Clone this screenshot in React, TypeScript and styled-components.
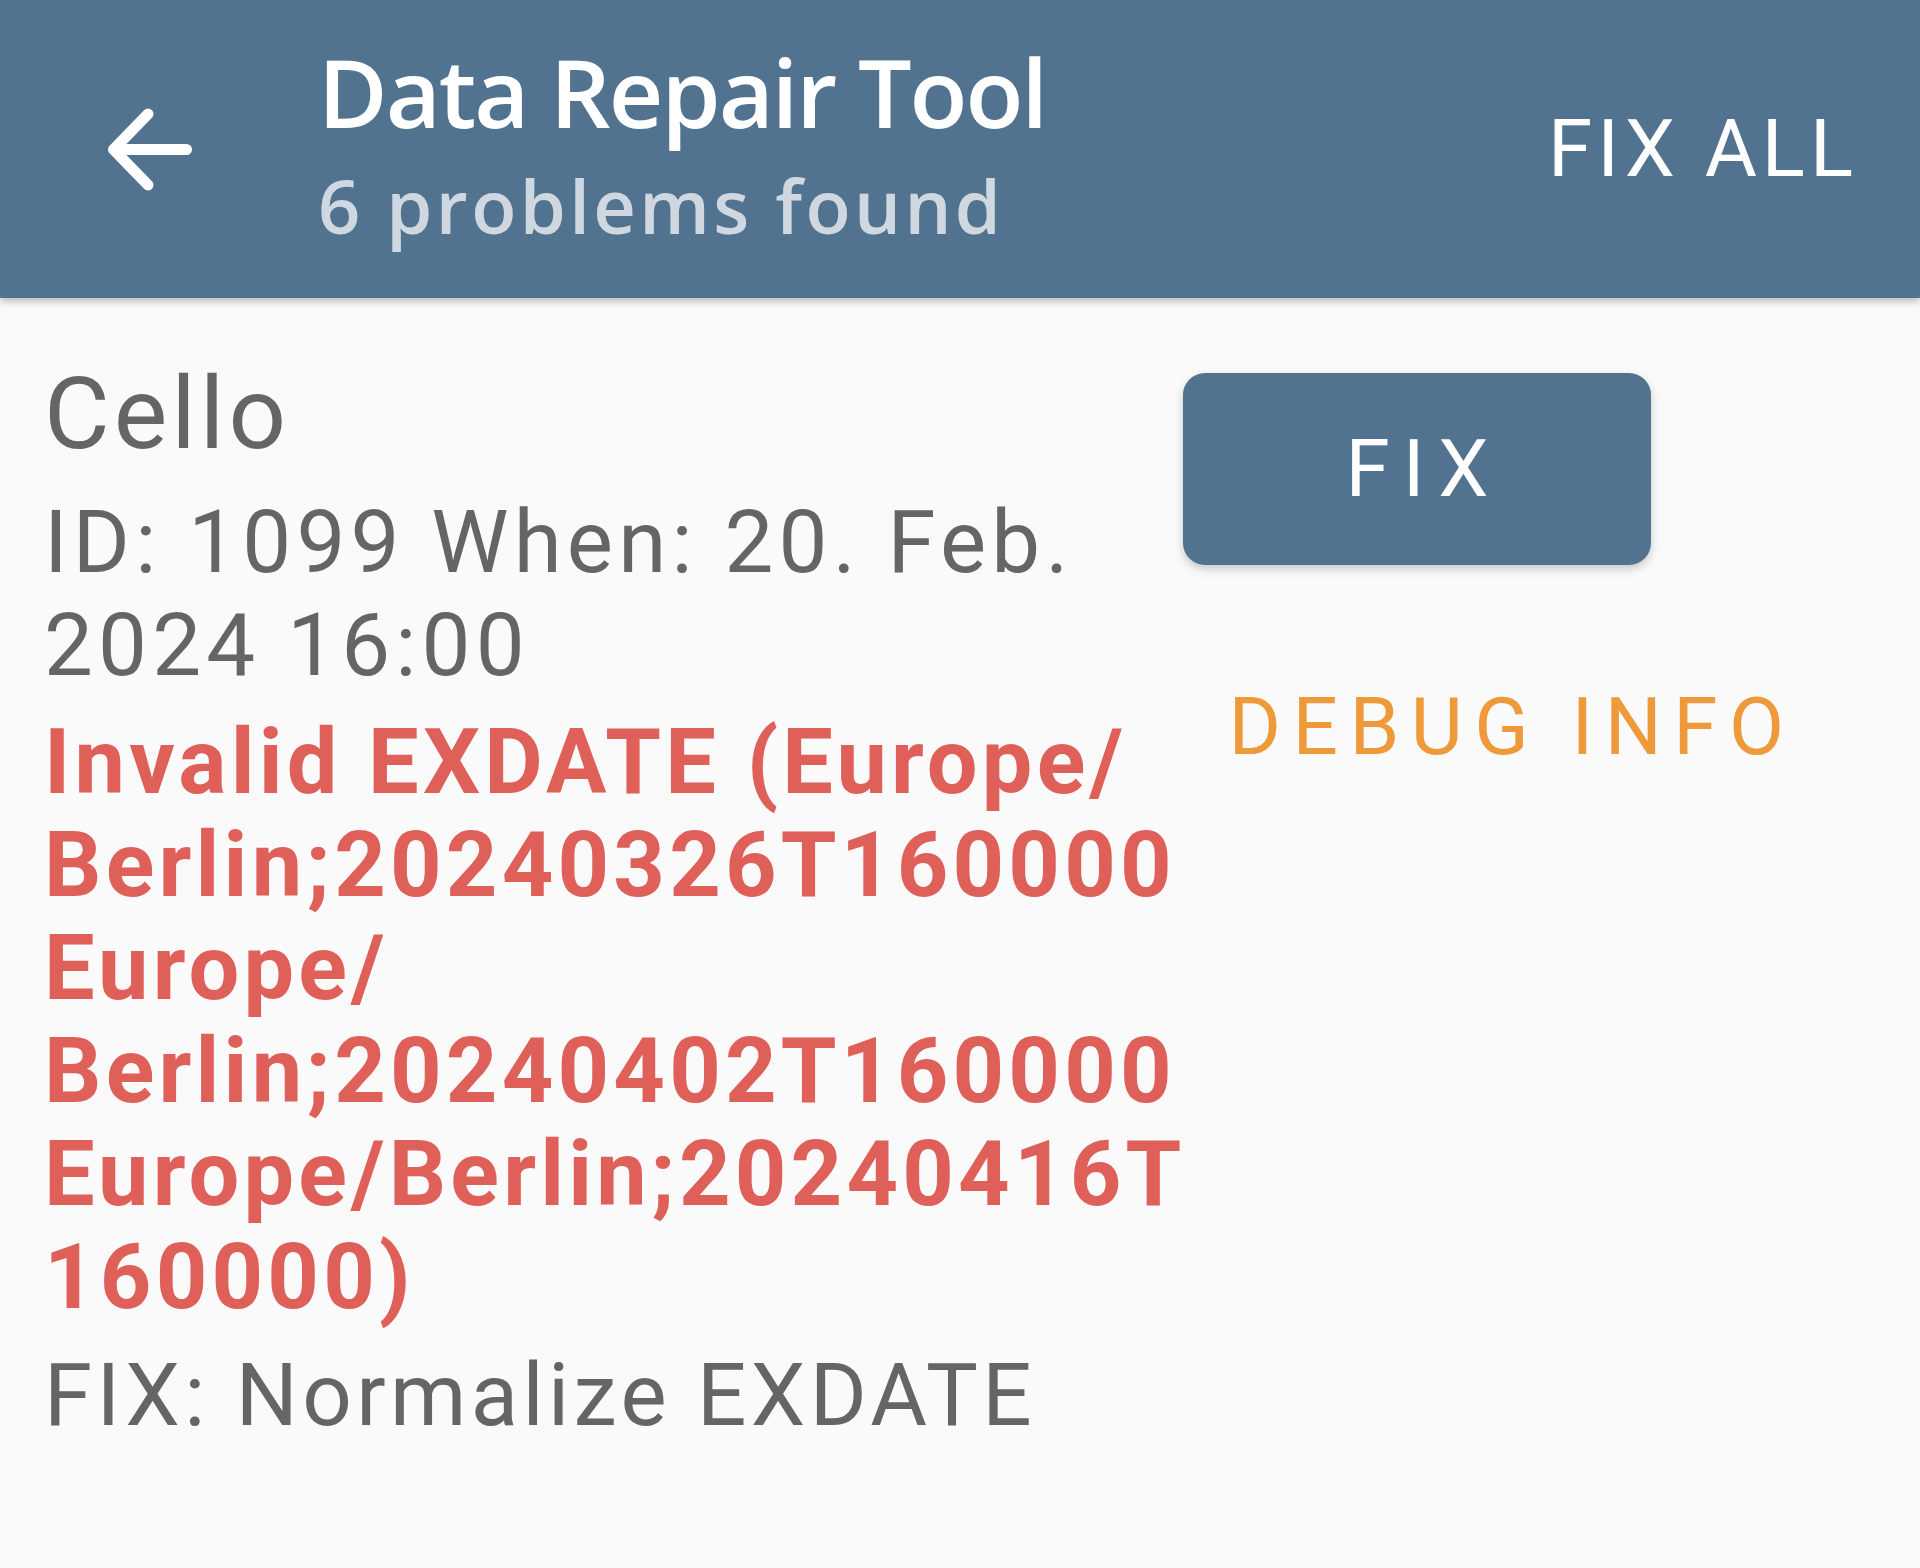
import React from "react";
import styled, { createGlobalStyle } from "styled-components";

const GlobalStyle = createGlobalStyle`
  html, body { margin: 0; padding: 0; background: #fafafa; }
  body { font-family: Roboto, "Noto Sans", sans-serif; }
`;

const Page = styled.div`
  width: 1920px;
  min-height: 1568px;
  background: #fafafa;
  display: flex;
  flex-direction: column;
`;

const Header = styled.header`
  height: 298px;
  box-sizing: border-box;
  background: #52738f;
  display: flex;
  align-items: center;
  padding: 0 62px 0 87px;
  box-shadow: 0 3px 8px rgba(0, 0, 0, 0.28);
  position: relative;
  z-index: 1;
`;

const BackButton = styled.button`
  width: 127px;
  height: 127px;
  padding: 0;
  border: none;
  background: transparent;
  display: flex;
  align-items: center;
  justify-content: center;
  color: #ffffff;
`;

const TitleBlock = styled.div`
  flex: 1;
  margin-left: 104px;
  margin-bottom: 13px;
  display: flex;
  flex-direction: column;
  font-family: "Open Sans", "Noto Sans", sans-serif;
  font-weight: 600;
`;

const Title = styled.div`
  font-size: 95px;
  line-height: 114px;
  letter-spacing: -2px;
  color: #ffffff;
  margin-bottom: 13px;
`;

const Subtitle = styled.div`
  font-size: 74px;
  line-height: 90px;
  letter-spacing: 3.4px;
  color: rgba(255, 255, 255, 0.72);
`;

const ActionText = styled.button`
  border: none;
  background: transparent;
  padding: 0;
  font-family: Roboto, sans-serif;
  font-size: 80px;
  line-height: 96px;
  color: #ffffff;
  letter-spacing: 5px;
`;

const Content = styled.main`
  display: flex;
  padding: 57px 90px 0 44px;
  gap: 4px;
`;

const LeftColumn = styled.div`
  width: 1135px;
  display: flex;
  flex-direction: column;
`;

const Name = styled.div`
  font-size: 101px;
  line-height: 118px;
  letter-spacing: 4px;
  color: #656565;
  margin-bottom: 18px;
`;

const Meta = styled.div<{ $gap?: number; $spacing?: number }>`
  font-size: 87px;
  line-height: 103px;
  letter-spacing: ${(p) => p.$spacing ?? 4.6}px;
  color: #656565;
  margin-bottom: ${(p) => p.$gap ?? 0}px;
`;

const ErrorText = styled.div`
  font-size: 90px;
  line-height: 103px;
  font-weight: 700;
  letter-spacing: 4.2px;
  color: #df5f59;
  margin-bottom: 15px;
`;

const RightColumn = styled.div`
  flex: 1;
  display: flex;
  flex-direction: column;
  align-items: stretch;
  padding-top: 18px;
`;

const FixButton = styled.button`
  width: 468px;
  height: 192px;
  border: none;
  border-radius: 22px;
  background: #52738f;
  color: #ffffff;
  font-family: Roboto, sans-serif;
  font-size: 80px;
  letter-spacing: 13px;
  padding: 0 0 0 13px;
  box-shadow: 0 4px 10px rgba(0, 0, 0, 0.2);
  display: flex;
  align-items: center;
  justify-content: center;
`;

const DebugButton = styled.button`
  margin-top: 114px;
  border: none;
  background: transparent;
  padding: 0 0 0 11px;
  font-family: Roboto, sans-serif;
  font-size: 80px;
  line-height: 96px;
  letter-spacing: 11.5px;
  color: #ee9a3a;
  text-align: center;
`;

const errorLines = [
  "Invalid EXDATE (Europe/",
  "Berlin;20240326T160000",
  "Europe/",
  "Berlin;20240402T160000",
  "Europe/Berlin;20240416T",
  "160000)",
];

export default function App() {
  return (
    <Page>
      <GlobalStyle />
      <Header>
        <BackButton aria-label="Back">
          <svg
            width="127"
            height="127"
            viewBox="0 0 127 127"
            fill="none"
            stroke="currentColor"
            strokeWidth="11"
            strokeLinecap="round"
            strokeLinejoin="round"
          >
            <path d="M99.5 63.5H27M61 28L26.5 63.5 61 99" />
          </svg>
        </BackButton>
        <TitleBlock>
          <Title>Data Repair Tool</Title>
          <Subtitle>6 problems found</Subtitle>
        </TitleBlock>
        <ActionText>FIX ALL</ActionText>
      </Header>
      <Content>
        <LeftColumn>
          <Name>Cello</Name>
          <Meta $gap={14} $spacing={5.2}>
            ID: 1099 When: 20. Feb.
            <br />
            2024 16:00
          </Meta>
          <ErrorText>
            {errorLines.map((l, i) => (
              <React.Fragment key={i}>
                {l}
                {i < errorLines.length - 1 && <br />}
              </React.Fragment>
            ))}
          </ErrorText>
          <Meta $spacing={4.4}>FIX: Normalize EXDATE</Meta>
        </LeftColumn>
        <RightColumn>
          <FixButton>FIX</FixButton>
          <DebugButton>DEBUG INFO</DebugButton>
        </RightColumn>
      </Content>
    </Page>
  );
}
